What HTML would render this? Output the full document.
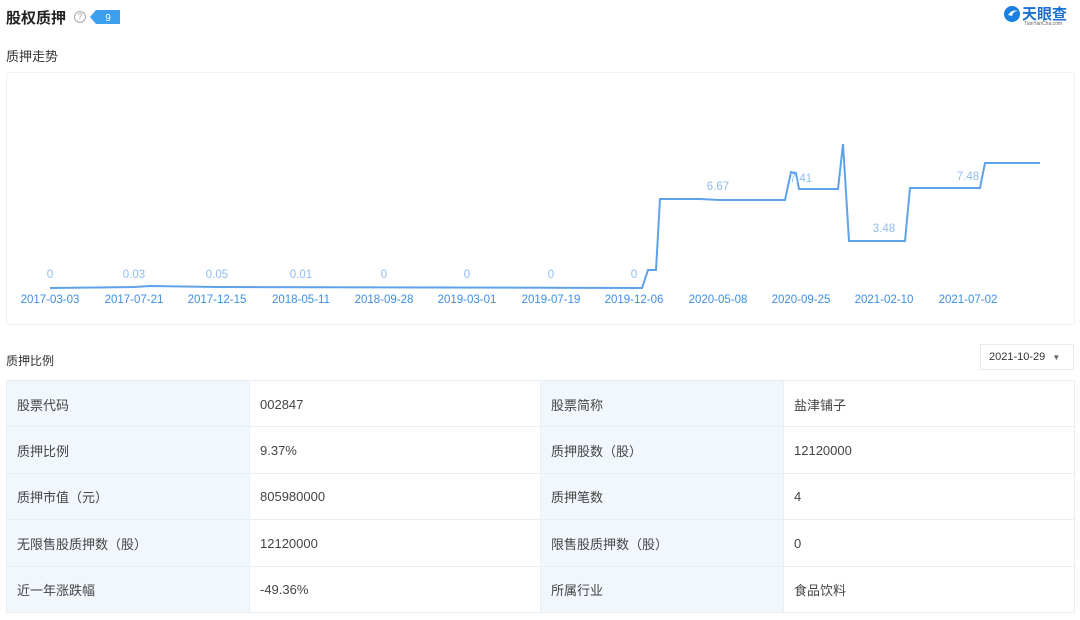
<!DOCTYPE html>
<html><head><meta charset="utf-8"><style>
body{margin:0;width:1080px;height:620px;background:#fff;font-family:"Liberation Sans","Noto Sans CJK SC",sans-serif;position:relative;overflow:hidden}
.a{position:absolute}
table{position:absolute;left:6px;top:380px;width:1069px;border-collapse:collapse;font-size:13px;color:#444}
td{height:46.4px;border:1px solid #e8eef5;padding:1px 0 0 10px;box-sizing:border-box}
td.l{background:#f2f7fd;width:243px}
td.v{width:291px}
</style></head><body>
<div class="a" style="left:6px;top:7px;font-size:15px;font-weight:bold;color:#222">股权质押</div>
<div class="a" style="left:74px;top:11px;width:10px;height:10px;border:1px solid #aaa;border-radius:50%;font-size:8px;color:#999;text-align:center;line-height:10px">?</div>
<svg class="a" style="left:90px;top:10px" width="30" height="14"><path d="M6 0H30V14H6L0 7Z" fill="#3d9ff0"/><text x="18" y="11" font-size="10" fill="#fff" text-anchor="middle" font-family="Liberation Sans">9</text></svg>
<svg class="a" style="left:1003px;top:5px" width="18" height="18"><circle cx="9" cy="9" r="8" fill="#1a7fe0"/><path d="M5 10q4 -6 10 -4q-5 0 -6 5z" fill="#fff"/></svg>
<div class="a" style="left:1022px;top:3px;font-size:15px;font-weight:bold;color:#1a6fd0">天眼查</div>
<div class="a" style="left:1024px;top:21px;font-size:5px;color:#666">TianYanCha.com</div>
<div class="a" style="left:6px;top:46px;font-size:13px;color:#333">质押走势</div>
<div class="a" style="left:6px;top:72px;width:1067px;height:251px;border:1px solid #eef0f3;border-radius:3px"></div>
<svg class="a" style="left:0;top:0" width="1080" height="330" font-family="Liberation Sans" font-size="11.5">
<polyline fill="none" stroke="#5ea2ec" stroke-width="2" points="50,288 134,287 150,286 217,287 642,288 648,270 656,270 660,199 700,199 720,200 785,200 791,172 796,173 799,189 838,189 843,144 849,241 905,241 910,188 980,188 985,163 1040,163"/>
<g fill="#8fbcef" text-anchor="middle"><text x="50" y="278">0</text><text x="134" y="278">0.03</text><text x="217" y="278">0.05</text><text x="301" y="278">0.01</text><text x="384" y="278">0</text><text x="467" y="278">0</text><text x="551" y="278">0</text><text x="634" y="278">0</text><text x="718" y="190">6.67</text><text x="801" y="182">7.41</text><text x="884" y="232">3.48</text><text x="968" y="180">7.48</text></g>
<g fill="#3d8fe3" text-anchor="middle"><text x="50" y="303">2017-03-03</text><text x="134" y="303">2017-07-21</text><text x="217" y="303">2017-12-15</text><text x="301" y="303">2018-05-11</text><text x="384" y="303">2018-09-28</text><text x="467" y="303">2019-03-01</text><text x="551" y="303">2019-07-19</text><text x="634" y="303">2019-12-06</text><text x="718" y="303">2020-05-08</text><text x="801" y="303">2020-09-25</text><text x="884" y="303">2021-02-10</text><text x="968" y="303">2021-07-02</text></g>
</svg>
<div class="a" style="left:6px;top:352px;font-size:12px;color:#333">质押比例</div>
<div class="a" style="left:980px;top:344px;width:94px;height:26px;border:1px solid #e6e9ee;box-sizing:border-box;font-size:11px;color:#333;line-height:24px;padding-left:8px">2021-10-29 <span style="font-size:8px;color:#666;margin-left:4px">▼</span></div>
<table>
<tr><td class="l">股票代码</td><td class="v">002847</td><td class="l">股票简称</td><td>盐津铺子</td></tr>
<tr><td class="l">质押比例</td><td class="v">9.37%</td><td class="l">质押股数（股）</td><td>12120000</td></tr>
<tr><td class="l">质押市值（元）</td><td class="v">805980000</td><td class="l">质押笔数</td><td>4</td></tr>
<tr><td class="l">无限售股质押数（股）</td><td class="v">12120000</td><td class="l">限售股质押数（股）</td><td>0</td></tr>
<tr><td class="l">近一年涨跌幅</td><td class="v">-49.36%</td><td class="l">所属行业</td><td>食品饮料</td></tr>
</table>
</body></html>
